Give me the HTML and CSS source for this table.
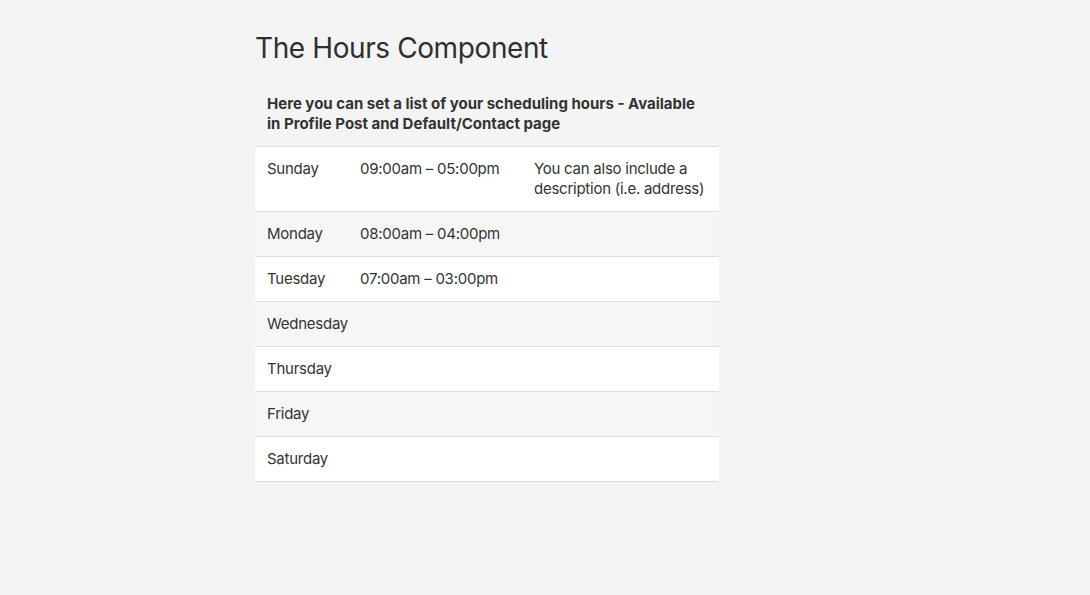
FILE: index.html
```html
<!DOCTYPE html>
<html>
<head>
<meta charset="utf-8">
<link rel="stylesheet" href="styles.css">
</head>
<body>
<main class="page">
  <h1 class="title">The Hours Component</h1>
  <table class="hours">
    <caption class="hours-caption">Here you can set a list of your scheduling hours - Available in Profile Post and Default/Contact page</caption>
    <colgroup>
      <col class="col-day">
      <col class="col-time">
      <col class="col-desc">
    </colgroup>
    <tbody>
      <tr><td>Sunday</td><td class="time">09:00am – 05:00pm</td><td>You can also include a description (i.e. address)</td></tr>
      <tr><td>Monday</td><td class="time">08:00am – 04:00pm</td><td></td></tr>
      <tr><td>Tuesday</td><td class="time">07:00am – 03:00pm</td><td></td></tr>
      <tr><td>Wednesday</td><td></td><td></td></tr>
      <tr><td>Thursday</td><td></td><td></td></tr>
      <tr><td>Friday</td><td></td><td></td></tr>
      <tr><td>Saturday</td><td></td><td></td></tr>
    </tbody>
  </table>
</main>
</body>
</html>
```

FILE: styles.css
```css
html, body {
  margin: 0;
  padding: 0;
  background: #f4f4f4;
}
body {
  font-family: Inter, "Noto Sans", sans-serif;
  color: #333;
  font-size: 15px;
  line-height: 20px;
}
.page {
  width: 580px;
  margin: 0 auto;
  padding-top: 30px;
}
.title {
  margin: 0 0 16px;
  font-size: 28px;
  line-height: 36px;
  font-weight: 400;
  letter-spacing: -0.4px;
  color: #2f2f2f;
}
.hours {
  width: 80%;
  border-collapse: collapse;
  table-layout: fixed;
}
.col-day { width: 93px; }
.col-time { width: 174px; }
.hours-caption {
  text-align: left;
  font-weight: 700;
  padding: 12px 16px 12px 12px;
  color: #333;
}
.hours td {
  padding: 12px 12px;
  vertical-align: top;
  letter-spacing: -0.25px;
  border-top: 1px solid #dddddd;
  border-bottom: 1px solid #dddddd;
}
.hours .time {
  white-space: nowrap;
}
.hours tr:nth-child(odd) {
  background: #ffffff;
}
.hours tr:nth-child(even) {
  background: #f6f6f6;
}
```
